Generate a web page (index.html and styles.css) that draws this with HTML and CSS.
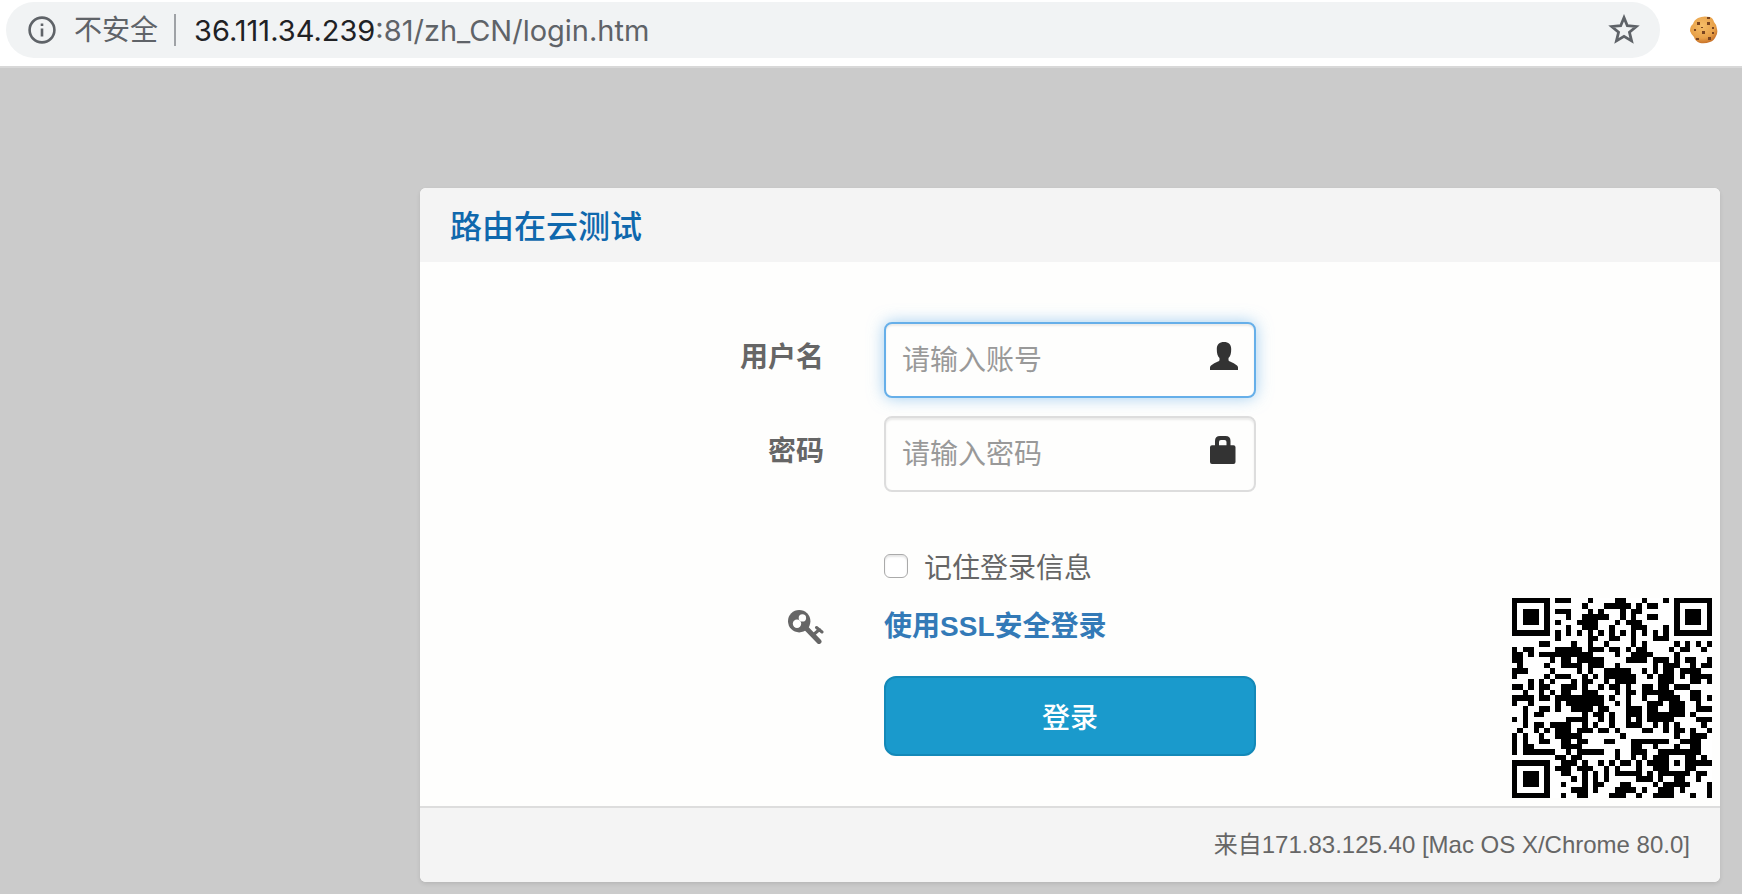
FILE: index.html
```html
<!DOCTYPE html>
<html lang="zh-CN">
<head>
    <meta charset="utf-8">
    <title>路由在云测试</title>
    <link rel="stylesheet" href="styles.css">
</head>
<body>
    <header class="toolbar">
        <div class="address-bar">
            <svg class="info-icon" viewBox="0 0 28 28">
                <circle cx="14" cy="14" r="12.4" fill="none" stroke="#5f6368" stroke-width="2.6"/>
                <path d="M12.7 12.5h2.6v8h-2.6zM12.7 7.5h2.6v2.6h-2.6z" fill="#5f6368"/>
            </svg>
            <span class="security">不安全</span>
            <span class="url"><span class="host">36.111.34.239</span>:81/zh_CN/login.htm</span>
            <svg class="star-icon" viewBox="0 0 30 30">
                <path d="M15 3.4l3.1 7.6 8.4.7-6.4 5.4 2 8.1-7.1-4.3-7.1 4.3 2-8.1-6.4-5.4 8.4-.7z" fill="none" stroke="#5f6368" stroke-width="2.6"/>
            </svg>
        </div>
        <svg class="cookie-icon" viewBox="0 0 28 28">
            <defs>
                <radialGradient id="dough" cx="45%" cy="35%" r="65%">
                    <stop offset="0" stop-color="#f5bd68"/>
                    <stop offset=".7" stop-color="#e8a149"/>
                    <stop offset="1" stop-color="#c9732a"/>
                </radialGradient>
            </defs>
            <path d="M8 2Q13-.6 20 1q3 1 4 5 3 3 3 7 1 4-1 7-2 5-6 6-5 2-10 1-5-2-6-6-3-3-4-6 0-5 3-7 1-4 5-6z" fill="url(#dough)"/>
            <g fill="#7a4520">
                <path d="M7 6h3v3H7zM17 6h3v3h-3zM12 15h3v3h-3zM17 1h3v2h-3zM22 11h2v2h-2z"/>
                <path d="M4 13h2v2H4zM11 11h2v1h-2zM6 22h3v2H6zM18 21h3v3h-3zM22 16h2v2h-2z"/>
            </g>
        </svg>
    </header>

    <main class="panel">
        <h1 class="panel-heading">路由在云测试</h1>
        <div class="panel-body">
            <form class="login-form">
                <label class="field-label" for="username">用户名</label>
                <div class="field">
                    <input class="text-input" type="text" id="username" placeholder="请输入账号" autofocus>
                    <svg class="field-icon" viewBox="0 0 28 28">
                        <path d="M14 0c4.500 0 7.200 2.500 7.200 7 0 4.500-.7 7-2.700 9v2q0 1 1.500 1.500Q24 21 27 23.500q1 .8 1 2V28H0v-2.500q0-1.200 1-2 3-2.500 7-4 1.500-.5 1.500-1.500v-2c-2-2-2.700-4.500-2.700-9C6.800 2.500 9.500 0 14 0z"/>
                    </svg>
                </div>

                <label class="field-label" for="password">密码</label>
                <div class="field">
                    <input class="text-input" type="password" id="password" placeholder="请输入密码">
                    <svg class="field-icon" viewBox="0 0 28 28">
                        <path fill-rule="evenodd" d="M5 9.300V5q0-5 5-5h5.500q5 0 5 5v4.300h3q2 0 2 2V26q0 2-2 2H2q-2 0-2-2V11.300q0-2 2-2zM9 9.300h7.500V6q0-2-2-2H11q-2 0-2 2z"/>
                    </svg>
                </div>

                <div class="remember">
                    <input type="checkbox" id="remember">
                    <label for="remember">记住登录信息</label>
                </div>

                <svg class="key-icon" viewBox="0 0 36 34">
                    <circle cx="11.200" cy="11.200" r="11.200" fill="#666"/>
                    <circle cx="14.400" cy="7.900" r="3.700" fill="#fefefd"/>
                    <circle cx="9" cy="13.700" r="4.200" fill="#fefefd"/>
                    <path d="M17.500 17.500l13.500 14" fill="none" stroke="#666" stroke-width="5" stroke-linecap="round"/>
                    <path d="M25 25l6.500-5.500M28.500 17.500l5.500 4.500" fill="none" stroke="#666" stroke-width="3" stroke-linecap="round"/>
                </svg>
                <a class="ssl-link" href="#">使用SSL安全登录</a>

                <button class="login-button" type="submit">登录</button>
            </form>
            <svg class="qr-code" viewBox="0 0 37 37" shape-rendering="crispEdges">
                <path fill="#fff" d="M0 0h37v37H0z"/>
                <path class="qr-finder" d="M.5.5h6v6h-6zM30.500.5h6v6h-6zM.5 30.500h6v6h-6zM28.500 28.500h4v4h-4z"/>
                <path d="M2 2h3v3H2zM32 2h3v3h-3zM2 32h3v3H2zM30 30h1v1h-1z"/>
                <path class="qr-rows" d="M8 .5h3M14 .5h1M19 .5h2M24 .5h1M28 .5h1
                    M13 1.500h1M17 1.500h5M23 1.500h1M25 1.500h2
                    M8 2.500h3M14 2.500h1M16 2.500h1M20 2.500h1M22 2.500h2
                    M10 3.500h1M13 3.500h3M16 3.500h2M20 3.500h1M22 3.500h1M25 3.500h2
                    M8 4.500h1M12 4.500h4M19 4.500h1M21 4.500h3
                    M10 5.500h1M13 5.500h3M18 5.500h1M22 5.500h3M28 5.500h1
                    M8 6.500h1M10 6.500h1M12 6.500h1M14 6.500h1M16 6.500h1M18 6.500h1M20 6.500h1M22 6.500h1M24 6.500h1M26 6.500h1M28 6.500h1
                    M8 7.500h1M14 7.500h2M18 7.500h2M22 7.500h1M26 7.500h3
                    M5 8.500h2M11 8.500h1M14 8.500h1M17 8.500h1M22 8.500h1M24 8.500h1M30 8.500h1M32 8.500h1M34 8.500h1M36 8.500h1
                    M0 9.500h1M2 9.500h2M8 9.500h5M14 9.500h2M16 9.500h1M18 9.500h2M21 9.500h1M23 9.500h2M29 9.500h1M31 9.500h2M35 9.500h1
                    M0 10.500h2M3 10.500h1M5 10.500h10M19 10.500h1M22 10.500h4M30 10.500h1
                    M0 11.500h2M7 11.500h1M9 11.500h2M12 11.500h5M21 11.500h4M26 11.500h3M30 11.500h1M32 11.500h2M36 11.500h1
                    M1 12.500h1M6 12.500h1M9 12.500h4M14 12.500h3M19 12.500h1M26 12.500h1M28 12.500h3M33 12.500h1M35 12.500h2
                    M0 13.500h3M7 13.500h1M12 13.500h1M14 13.500h1M17 13.500h5M24 13.500h1M26 13.500h1M28 13.500h2M31 13.500h4
                    M0 14.500h1M6 14.500h1M8 14.500h3M13 14.500h1M15 14.500h1M17 14.500h6M25 14.500h1M27 14.500h3M31 14.500h1M33 14.500h4
                    M3 15.500h1M5 15.500h1M7 15.500h1M11 15.500h1M13 15.500h2M17 15.500h1M19 15.500h4M27 15.500h3M33 15.500h2M36 15.500h1
                    M0 16.500h2M3 16.500h1M5 16.500h2M9 16.500h3M13 16.500h1M16 16.500h1M18 16.500h2M21 16.500h1M24 16.500h2M27 16.500h2M30 16.500h3
                    M2 17.500h1M5 17.500h1M7 17.500h1M9 17.500h2M13 17.500h3M19 17.500h1M21 17.500h2M24 17.500h6M33 17.500h2
                    M0 18.500h4M5 18.500h2M8 18.500h9M18 18.500h1M21 18.500h1M24 18.500h1M27 18.500h4M33 18.500h2M36 18.500h1
                    M0 19.500h1M3 19.500h1M8 19.500h1M10 19.500h7M19 19.500h1M21 19.500h1M25 19.500h3M29 19.500h3M34 19.500h1
                    M2 20.500h1M5 20.500h2M8 20.500h1M11 20.500h4M16 20.500h2M21 20.500h3M25 20.500h2M29 20.500h3M34 20.500h3
                    M2 21.500h1M4 21.500h2M13 21.500h1M15 21.500h2M18 21.500h1M21 21.500h3M25 21.500h7M33 21.500h1
                    M0 22.500h1M2 22.500h1M10 22.500h4M16 22.500h1M18 22.500h1M21 22.500h1M23 22.500h1M25 22.500h5M34 22.500h3
                    M2 23.500h1M4 23.500h2M7 23.500h4M13 23.500h1M15 23.500h1M18 23.500h1M21 23.500h3M26 23.500h1M28 23.500h1M30 23.500h1M35 23.500h1
                    M1 24.500h1M4 24.500h1M6 24.500h1M8 24.500h3M12 24.500h3M16 24.500h2M19 24.500h1M24 24.500h2M28 24.500h1M30 24.500h2M33 24.500h1M36 24.500h1
                    M0 25.500h1M2 25.500h1M5 25.500h1M8 25.500h5M20 25.500h1M30 25.500h1M33 25.500h3
                    M0 26.500h1M2 26.500h1M5 26.500h2M9 26.500h2M12 26.500h2M17 26.500h2M22 26.500h7M31 26.500h4
                    M0 27.500h1M2 27.500h2M9 27.500h4M22 27.500h2M26 27.500h1M30 27.500h1M33 27.500h2
                    M0 28.500h1M2 28.500h6M10 28.500h1M12 28.500h5M19 28.500h1M22 28.500h3M27 28.500h1M33 28.500h2
                    M8 29.500h2M11 29.500h2M19 29.500h1M22 29.500h1M24 29.500h1M26 29.500h2M33 29.500h1M35 29.500h1
                    M9 30.500h3M13 30.500h1M16 30.500h1M18 30.500h1M20 30.500h2M23 30.500h1M25 30.500h3M33 30.500h4
                    M8 31.500h3M12 31.500h2M14 31.500h1M17 31.500h1M19 31.500h1M23 31.500h1M26 31.500h2M33 31.500h1
                    M9 32.500h2M13 32.500h1M15 32.500h1M17 32.500h1M19 32.500h5M25 32.500h1M27 32.500h1M34 32.500h2
                    M11 33.500h1M13 33.500h1M15 33.500h1M17 33.500h1M23 33.500h3M27 33.500h1M30 33.500h2M34 33.500h1
                    M9 34.500h1M13 34.500h1M15 34.500h2M20 34.500h2M26 34.500h1M28 34.500h5M36 34.500h1
                    M11 35.500h3M15 35.500h1M19 35.500h4M24 35.500h1M27 35.500h3M31 35.500h1M36 35.500h1
                    M9 36.500h1M12 36.500h2M18 36.500h3M23 36.500h1M26 36.500h4M33 36.500h1M36 36.500h1"/>
            </svg>
        </div>
        <footer class="panel-footer">来自171.83.125.40 [Mac OS X/Chrome 80.0]</footer>
    </main>
</body>
</html>
```

FILE: styles.css
```css
* {
    box-sizing: border-box;
}
body {
    margin: 0;
    background-color: #cbcbcb;
    color: #666;
    font-family: "Liberation Sans", "Noto Sans CJK SC", sans-serif;
    font-size: 28px;
}

/* browser bar */
.toolbar {
    display: flex;
    align-items: center;
    height: 68px;
    padding: 0 24px 6px 6px;
    background-color: #fff;
    border-bottom: 2px solid #d8d8d8;
}
.address-bar {
    display: flex;
    flex: 1;
    align-items: center;
    height: 56px;
    padding: 0 20px 0 22px;
    border-radius: 28px;
    background-color: #f1f3f4;
    color: #5f6368;
    font-family: Inter, "Noto Sans CJK SC", sans-serif;
}
.info-icon {
    width: 28px;
    height: 28px;
    margin-right: 18px;
}
.security {
    padding-right: 16px;
    border-right: 2px solid #9fa2a6;
    line-height: 32px;
}
.url {
    flex: 1;
    margin-left: 18px;
    font-size: 29px;
}
.host {
    color: #202124;
}
.star-icon {
    width: 32px;
    height: 32px;
}
.cookie-icon {
    width: 28px;
    height: 28px;
    margin-left: 30px;
}

/* login panel */
.panel {
    margin: 120px 22px 12px 420px;
    border-radius: 6px;
    background-color: #fefefd;
    box-shadow: 0 2px 4px rgba(0, 0, 0, 0.1);
}
.panel-heading {
    margin: 0;
    padding: 4px 30px 0;
    border-radius: 6px 6px 0 0;
    background-color: #f4f4f4;
    color: #0f68ad;
    font-size: 32px;
    font-weight: 500;
    line-height: 70px;
}
.panel-body {
    display: flex;
    padding: 0 8px 8px 0;
}
.login-form {
    display: grid;
    flex: 1;
    grid-template-columns: 37% 372px;
    gap: 18px 60px;
    padding: 60px 0 42px;
}
.field-label {
    font-weight: bold;
    line-height: 72px;
    text-align: right;
}
.field {
    position: relative;
}
.text-input {
    display: block;
    width: 100%;
    height: 76px;
    padding: 2px 60px 0 16px;
    border: 2px solid #ddd;
    border-radius: 8px;
    background-color: #fefefd;
    box-shadow: inset 0 2px 2px rgba(0, 0, 0, 0.08);
    color: #555;
    font: inherit;
}
.text-input::placeholder {
    color: #999;
}
.text-input:focus {
    border-color: #66afe9;
    outline: none;
    box-shadow: inset 0 2px 2px rgba(0, 0, 0, 0.08), 0 0 16px rgba(102, 175, 233, 0.6);
}
.field-icon {
    position: absolute;
    top: 20px;
    right: 18px;
    width: 28px;
    height: 28px;
    fill: #333;
}
.remember {
    display: flex;
    grid-column: 2;
    align-items: center;
    gap: 16px;
    height: 40px;
    margin-top: 36px;
}
.remember input {
    appearance: none;
    width: 24px;
    height: 24px;
    margin: 0;
    border: 1px solid #aaa;
    border-radius: 6px;
    background-color: #fff;
    box-shadow: inset 0 2px 2px rgba(0, 0, 0, 0.1);
}
.remember input:checked {
    background-color: #337ab7;
}
.key-icon {
    justify-self: end;
    align-self: center;
    width: 36px;
    height: 34px;
}
.ssl-link {
    color: #337ab7;
    font-weight: bold;
    line-height: 46px;
    text-decoration: none;
}
.login-button {
    grid-column: 2;
    height: 80px;
    margin-top: 8px;
    border: 2px solid #1489b8;
    border-radius: 12px;
    background-color: #1a9acc;
    color: #fff;
    font: inherit;
    font-weight: 500;
    cursor: pointer;
}
.qr-code {
    align-self: flex-end;
    width: 200px;
    height: 200px;
}
.qr-finder {
    fill: none;
    stroke: #000;
}
.qr-rows {
    stroke: #000;
}
.panel-footer {
    padding: 0 30px;
    border-top: 2px solid #ddd;
    border-radius: 0 0 6px 6px;
    background-color: #f4f4f4;
    font-size: 24px;
    line-height: 74px;
    text-align: right;
}
```
